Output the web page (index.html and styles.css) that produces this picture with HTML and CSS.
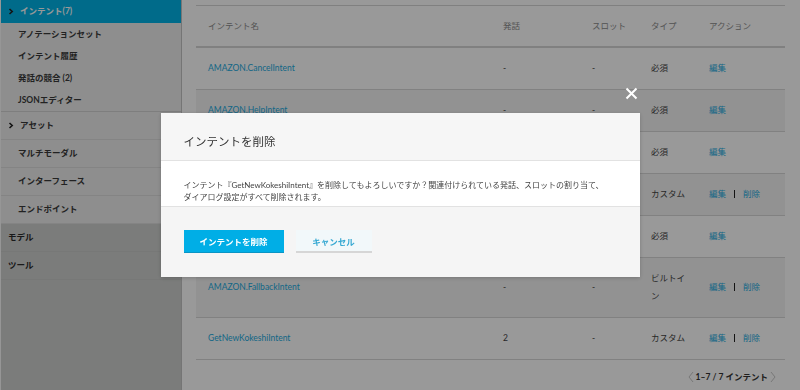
FILE: index.html
```html
<!DOCTYPE html>
<html lang="ja">
<head>
    <meta charset="UTF-8">
    <meta name="viewport" content="width=device-width, initial-scale=1.0">
    <title>インテント</title>
    <link rel="stylesheet" href="styles.css">
</head>
<body>
    <div class="page">
        <nav class="sidebar">
            <div class="nav-group">
                <div class="nav-head active">
                    <svg class="chev" width="6" height="7" viewBox="0 0 6 7"><path d="M1.5 1 L4.2 3.5 L1.5 6" fill="none" stroke="currentColor" stroke-width="1.6"/></svg>
                    インテント(7)
                </div>
                <ul class="nav-sub">
                    <li>アノテーションセット</li>
                    <li>インテント履歴</li>
                    <li>発話の競合 (2)</li>
                    <li>JSONエディター</li>
                </ul>
            </div>
            <div class="nav-item parent">
                <svg class="chev" width="6" height="7" viewBox="0 0 6 7"><path d="M1.5 1 L4.2 3.5 L1.5 6" fill="none" stroke="currentColor" stroke-width="1.6"/></svg>
                アセット
            </div>
            <div class="nav-item">マルチモーダル</div>
            <div class="nav-item">インターフェース</div>
            <div class="nav-item">エンドポイント</div>
            <div class="nav-section">モデル</div>
            <div class="nav-section">ツール</div>
        </nav>

        <main class="content">
            <table class="intents">
                <colgroup>
                    <col style="width: 295px">
                    <col style="width: 89px">
                    <col style="width: 59px">
                    <col style="width: 58px">
                    <col style="width: 88px">
                </colgroup>
                <thead>
                    <tr>
                        <th>インテント名</th>
                        <th>発話</th>
                        <th>スロット</th>
                        <th>タイプ</th>
                        <th>アクション</th>
                    </tr>
                </thead>
                <tbody>
                    <tr>
                        <td><a href="#">AMAZON.CancelIntent</a></td>
                        <td>-</td>
                        <td>-</td>
                        <td>必須</td>
                        <td><a href="#">編集</a></td>
                    </tr>
                    <tr>
                        <td><a href="#">AMAZON.HelpIntent</a></td>
                        <td>-</td>
                        <td>-</td>
                        <td>必須</td>
                        <td><a href="#">編集</a></td>
                    </tr>
                    <tr>
                        <td><a href="#">AMAZON.StopIntent</a></td>
                        <td>-</td>
                        <td>-</td>
                        <td>必須</td>
                        <td><a href="#">編集</a></td>
                    </tr>
                    <tr>
                        <td><a href="#">HelloWorldIntent</a></td>
                        <td>5</td>
                        <td>-</td>
                        <td>カスタム</td>
                        <td><a href="#">編集</a><span class="sep"></span><a href="#">削除</a></td>
                    </tr>
                    <tr>
                        <td><a href="#">AMAZON.NavigateHomeIntent</a></td>
                        <td>-</td>
                        <td>-</td>
                        <td>必須</td>
                        <td><a href="#">編集</a></td>
                    </tr>
                    <tr>
                        <td><a href="#">AMAZON.FallbackIntent</a></td>
                        <td>-</td>
                        <td>-</td>
                        <td>ビルトイン</td>
                        <td><a href="#">編集</a><span class="sep"></span><a href="#">削除</a></td>
                    </tr>
                    <tr>
                        <td><a href="#">GetNewKokeshiIntent</a></td>
                        <td>2</td>
                        <td>-</td>
                        <td>カスタム</td>
                        <td><a href="#">編集</a><span class="sep"></span><a href="#">削除</a></td>
                    </tr>
                </tbody>
            </table>
            <div class="pager">
                <svg width="6" height="12" viewBox="0 0 6 12"><path d="M5 1 L1 6 L5 11" fill="none" stroke="#c8c8c8" stroke-width="1"/></svg>
                <span>1–7 / 7 インテント</span>
                <svg width="6" height="12" viewBox="0 0 6 12"><path d="M1 1 L5 6 L1 11" fill="none" stroke="#c8c8c8" stroke-width="1"/></svg>
            </div>
        </main>
    </div>

    <div class="backdrop">
        <div class="modal">
            <button class="modal-close" aria-label="閉じる">
                <svg width="13" height="13" viewBox="0 0 13 13"><path d="M1.5 1.5 L11.5 11.5 M11.5 1.5 L1.5 11.5" stroke="#fff" stroke-width="2"/></svg>
            </button>
            <div class="modal-header">
                <h2>インテントを削除</h2>
            </div>
            <div class="modal-body">
                <p>インテント『GetNewKokeshiIntent』を削除してもよろしいですか？関連付けられている発話、スロットの割り当て、<span class="phrase">ダイアログ設定がすべて削除されます。</span></p>
            </div>
            <div class="modal-footer">
                <button class="btn-primary">インテントを削除</button>
                <button class="btn-secondary">キャンセル</button>
            </div>
        </div>
    </div>
</body>
</html>
```

FILE: styles.css
```css
body {
    margin: 0;
    font-family: Lato, "Noto Sans CJK JP", sans-serif;
    font-size: 8.5px;
    color: #444;
    background-color: #fff;
}
.page {
    display: flex;
    height: 390px;
    overflow: hidden;
}

/* sidebar */
.sidebar {
    width: 180px;
    flex-shrink: 0;
    border-left: 1px solid #fafafa;
    border-right: 1px solid #c4c4c4;
    background-color: #cdcfcd;
    display: flex;
    flex-direction: column;
    font-weight: bold;
    color: #3a3a3a;
}
.nav-group {
    background-color: #ededed;
    border-bottom: 1px solid #d2d2d2;
}
.nav-head {
    height: 23px;
    line-height: 23px;
    padding-left: 7px;
}
.nav-head.active {
    background-color: #00b3e6;
    color: #fff;
}
.nav-head .chev {
    color: #222;
}
.chev {
    margin-right: 4px;
    vertical-align: -0.5px;
}
.nav-sub {
    list-style: none;
    margin: 0;
    padding: 0 0 0 17px;
}
.nav-sub li {
    height: 22px;
    line-height: 22px;
}
.nav-item {
    height: 27px;
    line-height: 26px;
    padding-left: 17px;
    background-color: #ededed;
    border-bottom: 1px solid #dcdcdc;
}
.nav-item.parent {
    padding-left: 7px;
}
.nav-item.parent .chev {
    color: #222;
}
.nav-section {
    height: 27px;
    line-height: 27px;
    padding-left: 7px;
    color: #2a2a2a;
    border-bottom: 1px solid #c6c8c6;
}

/* intent table */
.content {
    flex: 1;
    padding: 5px 15px 0 14px;
}
.intents {
    width: 100%;
    border-collapse: collapse;
    table-layout: fixed;
    border-top: 1px solid #d5d5d5;
}
.intents th {
    text-align: left;
    font-weight: normal;
    color: #8c8c8c;
    padding: 11px 10px 11px 12px;
    line-height: 18px;
    border-bottom: 2px solid #d5d5d5;
}
.intents td {
    padding: 11px 10px 12px 12px;
    line-height: 18px;
    border-bottom: 1px solid #d8d8d8;
    color: #444;
}
.intents tbody tr:nth-child(even) td {
    background-color: #f4f4f4;
}
.intents a {
    color: #1cabe0;
    text-decoration: none;
}
.sep {
    display: inline-block;
    width: 1px;
    height: 8px;
    margin: 0 8px;
    vertical-align: -1px;
    background-color: #222;
}
.pager {
    display: flex;
    justify-content: flex-end;
    align-items: center;
    gap: 2px;
    padding: 8px 9px 0 0;
    line-height: 18px;
    font-weight: bold;
    color: #333;
}

/* delete dialog */
.backdrop {
    position: fixed;
    inset: 0;
    background-color: rgba(0, 0, 0, 0.4);
    display: flex;
    align-items: center;
    justify-content: center;
}
.modal {
    position: relative;
    width: 479px;
    background-color: #fff;
    box-shadow: 0 1px 4px rgba(0, 0, 0, 0.2);
}
.modal-close {
    position: absolute;
    top: -26px;
    right: 2px;
    padding: 0;
    border: none;
    background: none;
    cursor: pointer;
}
.modal-close svg {
    display: block;
}
.modal-header {
    background-color: #f6f6f6;
    padding: 21px 23px 10px;
    border-bottom: 1px solid #e2e2e2;
}
.modal-header h2 {
    margin: 0;
    font-size: 11.5px;
    line-height: 16px;
    font-weight: normal;
    color: #333;
}
.modal-body {
    padding: 19px 23px 3px;
    border-bottom: 1px solid #e2e2e2;
}
.modal-body p {
    margin: 0;
    font-size: 8px;
    line-height: 11.5px;
    color: #444;
}
.phrase {
    white-space: nowrap;
}
.modal-footer {
    background-color: #f5f5f5;
    padding: 23px 23px 24px;
    display: flex;
    gap: 12px;
}
.modal-footer button {
    height: 23px;
    border: none;
    font-family: inherit;
    font-size: 8.5px;
    font-weight: bold;
    cursor: pointer;
}
.btn-primary {
    width: 100px;
    background-color: #00aee6;
    border-bottom: 1px solid #0a94c4 !important;
    color: #fff;
}
.btn-secondary {
    width: 76px;
    background-color: #f2f8fa;
    border-bottom: 2px solid #d6d6d6 !important;
    color: #35a8d2;
}
```
